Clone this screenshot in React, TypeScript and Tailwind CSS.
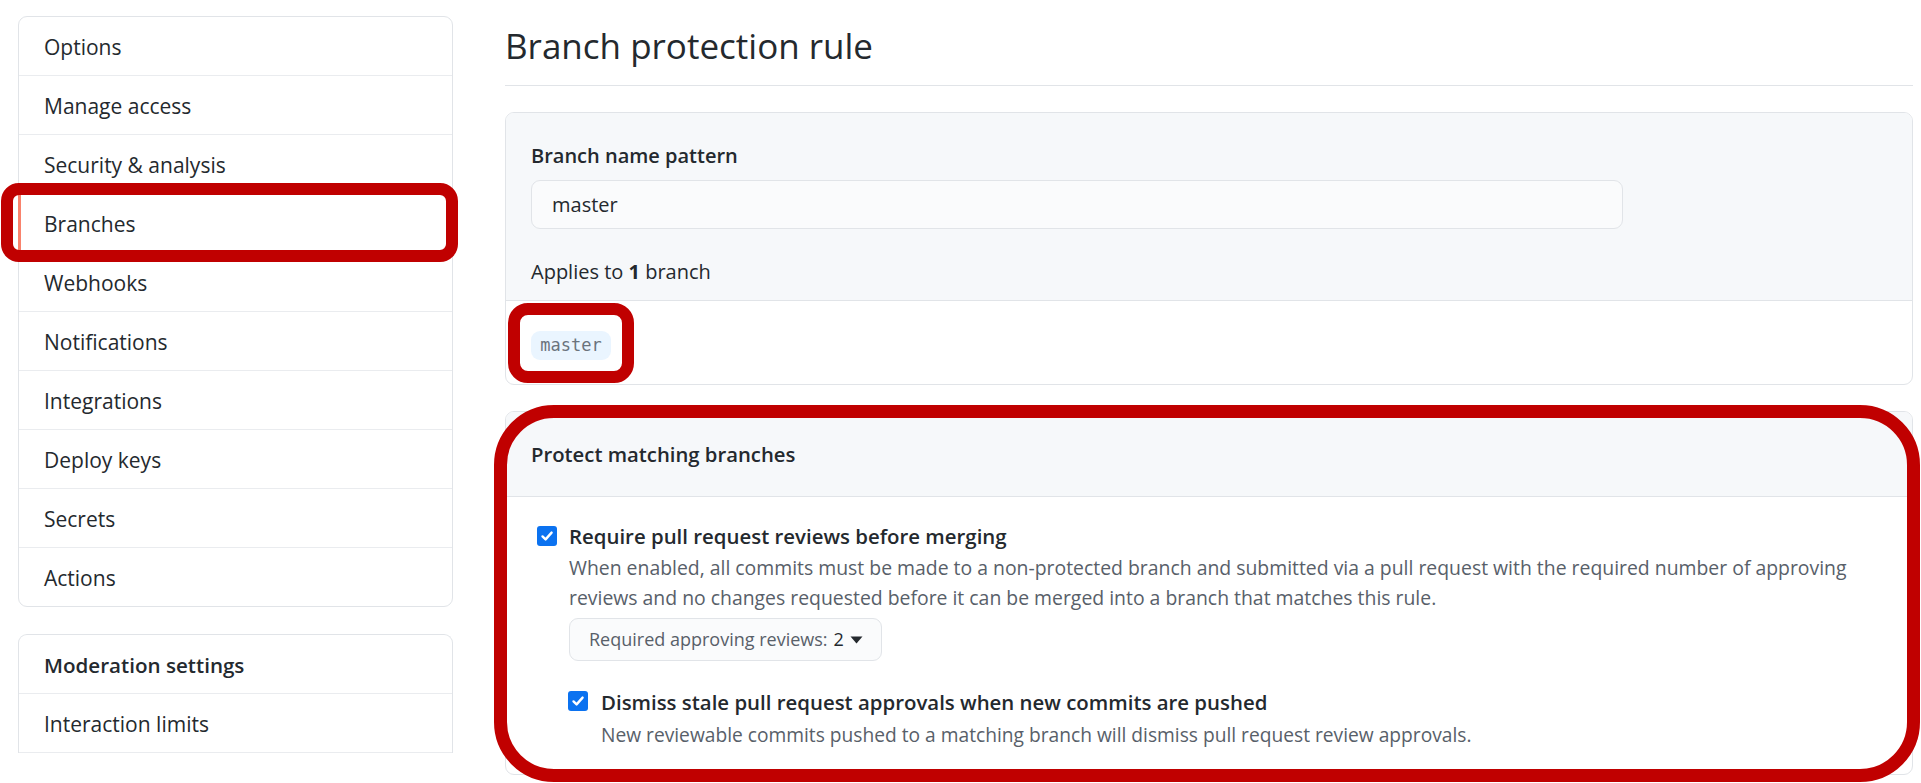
import React from "react";

const items = [
  "Options",
  "Manage access",
  "Security & analysis",
  "Branches",
  "Webhooks",
  "Notifications",
  "Integrations",
  "Deploy keys",
  "Secrets",
  "Actions",
];

function Check({ className }: { className: string }) {
  return (
    <span className={`flex h-[20px] w-[20px] shrink-0 items-center justify-center rounded-[3px] bg-[#0b72f0] ${className}`}>
      <svg width="14" height="14" viewBox="0 0 14 14" fill="none">
        <path d="M2.5 7.4 L5.6 10.4 L11.6 3.6" stroke="white" strokeWidth="2.4" strokeLinecap="round" strokeLinejoin="round" />
      </svg>
    </span>
  );
}

export default function App() {
  return (
    <div className="h-[783px] w-[1921px] overflow-hidden bg-white font-['Open_Sans',sans-serif] text-[#24292e]">
      <div className="flex pl-[18px] pr-[8px]">
        <aside className="w-[435px] shrink-0 pt-[16px]">
          <nav className="rounded-[9px] border border-[#e1e4e8]">
            {items.map((it, i) => (
              <div
                key={it}
                className={
                  i < items.length - 1
                    ? "relative flex h-[59px] items-center border-b border-[#eaecef] pl-[25px] pt-[4px] text-[21px]"
                    : "relative flex h-[58px] items-center pl-[25px] pt-[4px] text-[21px]"
                }
              >
                {it === "Branches" && (
                  <>
                    <span className="absolute bottom-0 left-[-1px] top-0 w-[3px] bg-[#f9826c]" />
                    <span className="pointer-events-none absolute bottom-[-10px] left-[-18px] right-[-6px] top-[-11px] z-10 rounded-[18px] border-[12px] border-[#c00000]" />
                  </>
                )}
                {it}
              </div>
            ))}
          </nav>
          <nav className="mt-[27px] rounded-t-[9px] border-x border-t border-[#e1e4e8]">
            <div className="flex h-[59px] items-center border-b border-[#eaecef] pl-[25px] pt-[3px] text-[20.6px] font-semibold">
              Moderation settings
            </div>
            <div className="flex h-[59px] items-center border-b border-[#eaecef] pl-[25px] pt-[3px] text-[21px]">
              Interaction limits
            </div>
          </nav>
        </aside>

        <main className="ml-[52px] w-[1408px]">
          <div className="h-[86px] border-b border-[#e1e4e8] pt-[24px]">
            <h1 className="text-[35px] font-normal leading-[44px]">Branch protection rule</h1>
          </div>

          <section className="mt-[26px] rounded-[9px] border border-[#e1e4e8]">
            <div className="rounded-t-[8px] border-b border-[#e1e4e8] bg-[#f6f8fa] px-[25px] pb-[13px] pt-[28px]">
              <div className="text-[20px] font-semibold leading-[30px]">Branch name pattern</div>
              <div className="mt-[9px] flex h-[49px] w-[1092px] items-center rounded-[9px] border border-[#e1e4e8] bg-[#fafbfc] pl-[20px] text-[20px]">
                master
              </div>
              <div className="mt-[28px] text-[20px] leading-[30px]">
                Applies to <span className="font-bold">1</span> branch
              </div>
            </div>
            <div className="px-[25px] pb-[24px] pt-[30px]">
              <div className="relative flex h-[29px] w-[80px] items-center justify-center rounded-[9px] bg-[#eaf5ff] font-['DejaVu_Sans_Mono',monospace] text-[17px] text-[#6a737d]">
                master
                <span className="pointer-events-none absolute bottom-[-23px] left-[-23px] right-[-23px] top-[-28px] rounded-[20px] border-[12px] border-[#c00000]" />
              </div>
            </div>
          </section>

          <section className="relative mt-[26px] rounded-[9px] border border-[#e1e4e8]">
            <span className="pointer-events-none absolute bottom-[-8px] left-[-12px] right-[-8px] top-[-7px] z-10 rounded-[60px] border-[13px] border-[#c00000]" />
            <div className="rounded-t-[8px] border-b border-[#e1e4e8] bg-[#f6f8fa] px-[25px] py-[27px]">
              <div className="text-[20.3px] font-semibold leading-[30px]">Protect matching branches</div>
            </div>
            <div className="pb-[24px] pl-[31px] pt-[24px]">
              <div className="flex items-start">
                <Check className="mt-[5px]" />
                <div className="ml-[12px]">
                  <div className="whitespace-nowrap text-[20.4px] font-semibold leading-[30px]">
                    Require pull request reviews before merging
                  </div>
                  <div className="mt-[2px] whitespace-nowrap text-[19.4px] leading-[30px] text-[#586069]">
                    When enabled, all commits must be made to a non-protected branch and submitted via a pull request with the required number of approving
                    <br />
                    reviews and no changes requested before it can be merged into a branch that matches this rule.
                  </div>
                  <button className="mt-[5px] flex h-[43px] items-center rounded-[9px] border border-[#e1e4e8] bg-[#fafbfc] pl-[19px] pr-[18px] text-[18px] text-[#586069]">
                    <span>Required approving reviews:</span>
                    <span className="ml-[6px] text-[#24292e]">2</span>
                    <svg className="ml-[6px]" width="13" height="8" viewBox="0 0 13 8">
                      <path d="M0.5 0.5 L12.5 0.5 L6.5 7.5 Z" fill="#24292e" />
                    </svg>
                  </button>
                  <div className="mt-[26px] flex items-start">
                    <Check className="ml-[-1px] mt-[4px]" />
                    <div className="ml-[13px]">
                      <div className="whitespace-nowrap text-[20.4px] font-semibold leading-[30px]">
                        Dismiss stale pull request approvals when new commits are pushed
                      </div>
                      <div className="mt-[3px] whitespace-nowrap text-[19.2px] leading-[30px] text-[#586069]">
                        New reviewable commits pushed to a matching branch will dismiss pull request review approvals.
                      </div>
                    </div>
                  </div>
                </div>
              </div>
            </div>
          </section>
        </main>
      </div>
    </div>
  );
}
